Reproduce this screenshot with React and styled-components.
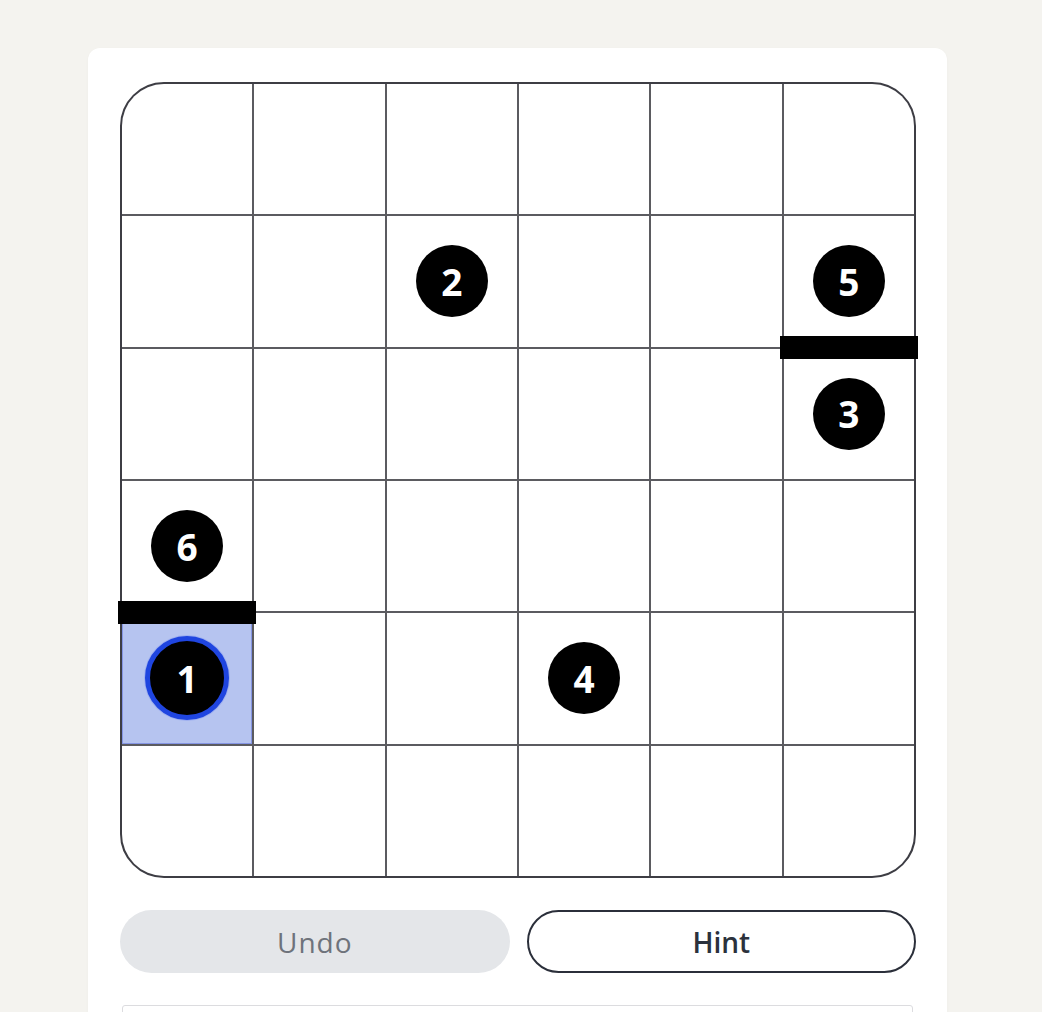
import React from "react";
import styled, { createGlobalStyle, css } from "styled-components";

const Global = createGlobalStyle`
  html, body { margin: 0; padding: 0; background: #f4f3ef; }
  body { font-family: "Open Sans", "Noto Sans", sans-serif; }
`;

const Page = styled.div`
  min-height: 1012px;
  padding: 48px 0 0 88px;
  box-sizing: border-box;
  overflow: hidden;
`;

const Card = styled.div`
  width: 859px;
  box-sizing: border-box;
  background: #ffffff;
  border-radius: 12px;
  padding: 34px 31px 32px 32px;
  box-shadow: 0 1px 3px rgba(0, 0, 0, 0.03);
  display: flex;
  flex-direction: column;
  gap: 32px;
`;

const BoardWrap = styled.div`
  position: relative;
  width: 796px;
  height: 796px;
`;

const Board = styled.div`
  width: 100%;
  height: 100%;
  box-sizing: border-box;
  border: 2px solid #3d3d44;
  border-radius: 44px;
  overflow: hidden;
  display: grid;
  grid-template-columns: repeat(6, 1fr);
  grid-template-rows: repeat(6, 1fr);
  gap: 2px;
  background: #5b5b60;
`;

const Cell = styled.div`
  background: #ffffff;
  display: flex;
  align-items: center;
  justify-content: center;
  ${(p) =>
    p.$active &&
    css`
      background: #b6c4f0;
      box-shadow: inset 0 0 0 1px #8595e4;
    `}
`;

const Dot = styled.div`
  width: 72px;
  height: 72px;
  border-radius: 50%;
  background: #000000;
  color: #ffffff;
  display: flex;
  align-items: center;
  justify-content: center;
  font-size: 37px;
  font-weight: 700;
  box-sizing: border-box;
  ${(p) =>
    p.$active &&
    css`
      width: 84px;
      height: 84px;
      border: 5px solid #1f45e0;
      box-shadow: 0 0 0 1px #9fb0f0;
    `}
`;

const Wall = styled.div`
  position: absolute;
  height: 23px;
  background: #000000;
`;

const Buttons = styled.div`
  display: grid;
  grid-template-columns: 1fr 1fr;
  gap: 17px;
  width: 796px;
`;

const Button = styled.button`
  height: 63px;
  border-radius: 32px;
  font-family: "Open Sans", "Noto Sans", sans-serif;
  font-size: 28px;
  cursor: pointer;
  box-sizing: border-box;
  ${(p) =>
    p.$variant === "muted"
      ? css`
          background: #e4e6e9;
          border: none;
          color: #6e737b;
          font-weight: 400;
          letter-spacing: 1px;
        `
      : css`
          background: #ffffff;
          border: 2px solid #2b2f3a;
          color: #2b313c;
          font-weight: 600;
        `}
`;

const Panel = styled.div`
  margin: 0 3px 0 2px;
  height: 60px;
  border: 1px solid #dcdcdf;
  border-radius: 3px;
  background: #ffffff;
`;

const N = 6;
const SIZE = 796;
const B = 2;
const G = 2;
const CELL = (SIZE - 2 * B - (N - 1) * G) / N;

const dots = {
  "1-2": 2,
  "1-5": 5,
  "2-5": 3,
  "3-0": 6,
  "4-0": 1,
  "4-3": 4,
};

const walls = [
  { row: 1, col: 5 },
  { row: 3, col: 0 },
];

export default function App() {
  const cells = [];
  for (let r = 0; r < N; r++) {
    for (let c = 0; c < N; c++) {
      const key = `${r}-${c}`;
      const n = dots[key];
      const active = n === 1;
      cells.push(
        <Cell key={key} $active={active}>
          {n && <Dot $active={active}>{n}</Dot>}
        </Cell>
      );
    }
  }
  return (
    <>
      <Global />
      <Page>
        <Card>
          <BoardWrap>
            <Board>{cells}</Board>
            {walls.map((w) => {
              const center = B + (w.row + 1) * CELL + w.row * G + G / 2;
              const left = B + w.col * (CELL + G) - 4;
              return (
                <Wall
                  key={`${w.row}-${w.col}`}
                  style={{ top: center - 11.5, left, width: CELL + 8 }}
                />
              );
            })}
          </BoardWrap>
          <Buttons>
            <Button $variant="muted">Undo</Button>
            <Button>Hint</Button>
          </Buttons>
          <Panel />
        </Card>
      </Page>
    </>
  );
}
